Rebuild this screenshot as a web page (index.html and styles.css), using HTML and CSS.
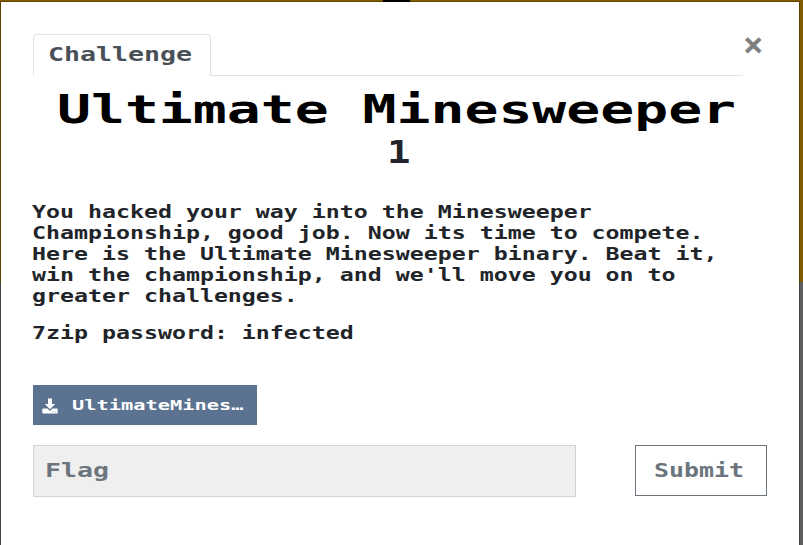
FILE: index.html
```html
<!DOCTYPE html>
<html lang="en">
<head>
<meta charset="utf-8">
<title>Challenge</title>
<link rel="stylesheet" href="styles.css">
</head>
<body>
<div class="backdrop-mark"></div>
<main class="modal">
  <header class="head">
    <nav class="tabs"><a class="tab"><span class="wide">Challenge</span></a></nav>
    <button class="close"><span>×</span></button>
  </header>
  <h1 class="title"><span class="wide">Ultimate Minesweeper</span></h1>
  <h2 class="points"><span class="wide">1</span></h2>
  <section class="description">
    <p>You hacked your way into the Minesweeper<br>Championship, good job. Now its time to compete.<br>Here is the Ultimate Minesweeper binary. Beat it,<br>win the championship, and we'll move you on to<br>greater challenges.</p>
    <p>7zip password: infected</p>
  </section>
  <a class="download">
    <svg class="icon" viewBox="0 0 16 16"><path fill="#fff" d="M6 0.5h4V6h3.2L8 11.2 2.8 6H6zM1 10.4h4.4L8 13 10.6 10.4H15q.7 0 .7.7v3.6q0 .8-.7.8H1q-.7 0-.7-.8v-3.6Q.3 10.4 1 10.4z"/><path fill="#b4c0ce" d="M10.5 13.2h1.1v1h-1.1zM12.7 13.2h1.1v1h-1.1z"/></svg>
    <span class="wide">UltimateMines…</span>
  </a>
  <div class="answer">
    <div class="flag"><span class="wide">Flag</span></div>
    <button class="submit"><span class="wide">Submit</span></button>
  </div>
</main>
</body>
</html>
```
FILE: styles.css
```css
* { box-sizing: border-box; }
html { height: 100%; overflow: hidden; }
body {
  margin: 0;
  height: 545px;
  padding-top: 1px;
  overflow: hidden;
  background: linear-gradient(#805b00 282px, #5d5f60 282px);
  color: #212529;
  font-family: "DejaVu Sans Mono", monospace;
  font-weight: bold;
}
.backdrop-mark { position: absolute; left: 383px; top: 0; width: 27px; height: 2px; background: #000; }
.modal {
  width: 800px;
  height: 544px;
  padding: 32px 32px 0;
  border: 1px solid rgba(0, 0, 0, .25);
  border-bottom: 0;
  background: #fff;
  background-clip: padding-box;
}
.wide { display: block; width: max-content; white-space: nowrap; transform-origin: 0 50%; }
.head { display: flex; height: 42px; }
.tabs { width: 710px; border-bottom: 1px solid #dee2e6; }
.tab {
  display: block;
  width: 178px;
  height: 42px;
  padding-left: 14px;
  border: 1px solid #dee2e6;
  border-bottom-color: #fff;
  border-radius: 4px 4px 0 0;
  background: #fff;
  color: #495057;
  font-size: 20px;
  line-height: 39px;
}
.tab .wide { transform: scaleX(1.329); }
.close {
  width: 20px;
  height: 20px;
  padding: 0;
  border: 0;
  background: none;
  color: #7f7f7f;
  font: bold 34px/16px "DejaVu Sans Mono", monospace;
}
.close span { display: block; width: 20px; text-align: center; }
.title { margin: 12px 0 0 24px; color: #000; font-size: 38.4px; line-height: 43px; }
.title .wide { transform: scaleX(1.469); }
.points { margin: 0 0 0 354px; font-size: 32px; line-height: 43px; }
.points .wide { transform: scaleX(1.22); }
.description { margin-top: 27px; font-size: 18px; line-height: 21px; }
.description p { width: 570px; margin: 0 0 16px -1px; transform: scaleX(1.291); transform-origin: 0 0; white-space: nowrap; }
.download {
  display: flex;
  align-items: center;
  width: 224px;
  height: 40px;
  margin-top: 42px;
  padding-left: 9px;
  background: #5b7290;
  color: #fff;
  font-size: 14.4px;
  line-height: 38px;
}
.icon { width: 16px; height: 16px; margin: 1px 14px 0 0; }
.download .wide { transform: scaleX(1.413); }
.answer { display: flex; justify-content: space-between; margin-top: 20px; }
.flag {
  width: 543px;
  height: 52px;
  padding-left: 11px;
  border: 1px solid #ced4da;
  background: #efefef;
  color: #6c757d;
  font-size: 20px;
  line-height: 49px;
}
.flag .wide { transform: scaleX(1.329); }
.submit {
  width: 132px;
  height: 51px;
  padding: 0 0 0 18px;
  border: 1px solid #6c757d;
  background: #fff;
  color: #6c757d;
  font: bold 19px/47px "DejaVu Sans Mono", monospace;
  text-align: left;
}
.submit .wide { transform: scaleX(1.311); }
```
